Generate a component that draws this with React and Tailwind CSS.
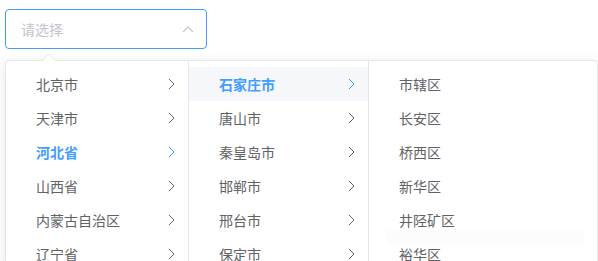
import React from "react";

const provinces = ["北京市", "天津市", "河北省", "山西省", "内蒙古自治区", "辽宁省"];
const cities = ["石家庄市", "唐山市", "秦皇岛市", "邯郸市", "邢台市", "保定市"];
const districts = ["市辖区", "长安区", "桥西区", "新华区", "井陉矿区", "裕华区"];

function ChevronRight({ active }) {
  return (
    <svg width="7" height="12" viewBox="0 0 7 12" className="shrink-0">
      <polyline
        points="1,1 6,6 1,11"
        fill="none"
        stroke={active ? "#409eff" : "#606266"}
        strokeWidth="1"
      />
    </svg>
  );
}

function Node({ label, active, hover, arrow }) {
  return (
    <div
      className={`h-[34px] flex items-center pl-[30px] pr-[13px] text-[14px] ${
        hover ? "bg-[#f5f7fa]" : ""
      } ${active ? "text-[#409eff] font-bold" : "text-[#606266]"}`}
    >
      <span className="flex-1 whitespace-nowrap">{label}</span>
      {arrow && <ChevronRight active={active} />}
    </div>
  );
}

export default function App() {
  return (
    <div
      className="min-h-screen bg-white pl-[5px] pt-[9px]"
      style={{ fontFamily: '"Noto Sans CJK SC", "Noto Sans", sans-serif' }}
    >
      {/* input */}
      <div className="w-[202px] h-[40px] border border-[#409eff] rounded-[4px] flex items-center pl-[15px] pr-[12px]">
        <span className="flex-1 text-[14px] text-[#c0c4cc]">请选择</span>
        <svg width="12" height="7" viewBox="0 0 12 7">
          <polyline
            points="1,6 6,1 11,6"
            fill="none"
            stroke="#c0c4cc"
            strokeWidth="1.2"
          />
        </svg>
      </div>

      {/* dropdown */}
      <div className="relative mt-[11px] w-[593px] border border-[#e4e7ed] rounded-[4px] bg-white shadow-[0_2px_12px_0_rgba(0,0,0,0.1)] flex">
        <svg
          width="14"
          height="7"
          viewBox="0 0 14 7"
          className="absolute top-[-7px] left-[36px]"
        >
          <polygon points="0,7 7,0 14,7" fill="#ffffff" />
          <polyline points="0,7 7,0 14,7" fill="none" stroke="#e4e7ed" strokeWidth="1" />
        </svg>

        <div className="w-[183px] border-r border-[#e4e7ed] py-[6px] h-[204px]">
          {provinces.map((p) => (
            <Node key={p} label={p} active={p === "河北省"} arrow />
          ))}
        </div>
        <div className="w-[180px] border-r border-[#e4e7ed] py-[6px] h-[204px]">
          {cities.map((c, i) => (
            <Node key={c} label={c} active={i === 0} hover={i === 0} arrow />
          ))}
        </div>
        <div className="relative flex-1 py-[6px] h-[204px]">
          {districts.map((d) => (
            <Node key={d} label={d} />
          ))}
          <div className="absolute left-[18px] right-[13px] top-[169px] h-[15px] bg-[#fcfcfc]" />
        </div>
      </div>
    </div>
  );
}
